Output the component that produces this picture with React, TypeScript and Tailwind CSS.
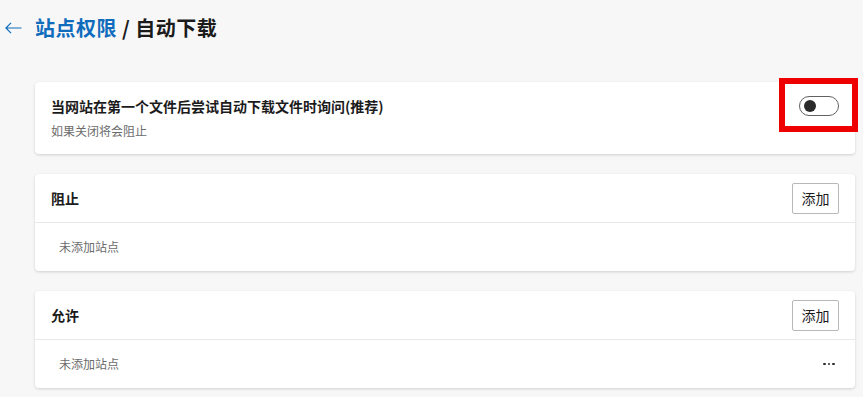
const font = { fontFamily: '"Noto Sans CJK SC", "Noto Sans", sans-serif' };

function Toggle() {
    return (
        <div className="w-[40px] h-[20px] rounded-full border border-[#616161] bg-white flex items-center pl-[4px]">
            <div className="w-[12px] h-[12px] rounded-full bg-[#2b2b2b]"></div>
        </div>
    );
}

function SiteList({ title, more }: { title: string; more?: boolean }) {
    return (
        <div className="bg-white rounded-[4px] shadow-[0_1px_3px_rgba(0,0,0,0.16)]">
            <div className="h-[49px] flex items-center justify-between pl-4 pr-4 border-b border-[#e8e8e8]">
                <span className="text-[14px] font-semibold text-[#1b1b1b]">{title}</span>
                <button className="w-[47px] h-[31px] border border-[#b8b8b8] rounded-[2px] text-[14px] text-[#1b1b1b] bg-white flex items-center justify-center">
                    添加
                </button>
            </div>
            <div className="h-[48px] flex items-center justify-between pl-6 pr-[18px]">
                <span className="text-[12px] text-[#6b6b6b]">未添加站点</span>
                {more && (
                    <div className="w-4 h-4 flex items-center justify-center gap-[2px]">
                        <div className="w-[2.5px] h-[2.5px] rounded-full bg-[#2b2b2b]"></div>
                        <div className="w-[2.5px] h-[2.5px] rounded-full bg-[#2b2b2b]"></div>
                        <div className="w-[2.5px] h-[2.5px] rounded-full bg-[#2b2b2b]"></div>
                    </div>
                )}
            </div>
        </div>
    );
}

export default function App() {
    return (
        <div className="w-[863px] h-[397px] bg-[#f7f7f7] overflow-hidden" style={font}>
            {/* Header */}
            <div className="h-14 flex items-center pl-[5px]">
                <svg className="w-[17px] h-[12px] text-[#0f6cbd]" viewBox="0 0 17 12" fill="none" stroke="currentColor" strokeWidth={1.2}>
                    <path d="M16.5 6H1M6 0.8L0.9 6L6 11.2" />
                </svg>
                <h1 className="ml-[13px] text-[20px] font-bold leading-none tracking-[0.5px] text-[#1b1b1b]">
                    <span className="text-[#0f6cbd]">站点权限</span> / 自动下载
                </h1>
            </div>

            <div className="mt-[26px] pl-[35px] pr-[8px] flex flex-col gap-5">
                {/* Ask toggle card */}
                <div className="relative bg-white rounded-[4px] shadow-[0_1px_3px_rgba(0,0,0,0.16)] h-[72px] pl-4 pr-4 pt-[14px] flex justify-between">
                    <div className="flex flex-col gap-[7px]">
                        <span className="text-[14px] leading-[20px] font-semibold text-[#1b1b1b]">
                            当网站在第一个文件后尝试自动下载文件时询问(推荐)
                        </span>
                        <span className="text-[12px] leading-[16px] text-[#6b6b6b]">如果关闭将会阻止</span>
                    </div>
                    <Toggle />
                    {/* highlight */}
                    <div className="absolute left-[744px] top-[-4px] w-[79px] h-[54px] border-[6px] border-[#ee0000]"></div>
                </div>

                <SiteList title="阻止" />
                <SiteList title="允许" more />
            </div>
        </div>
    );
}
